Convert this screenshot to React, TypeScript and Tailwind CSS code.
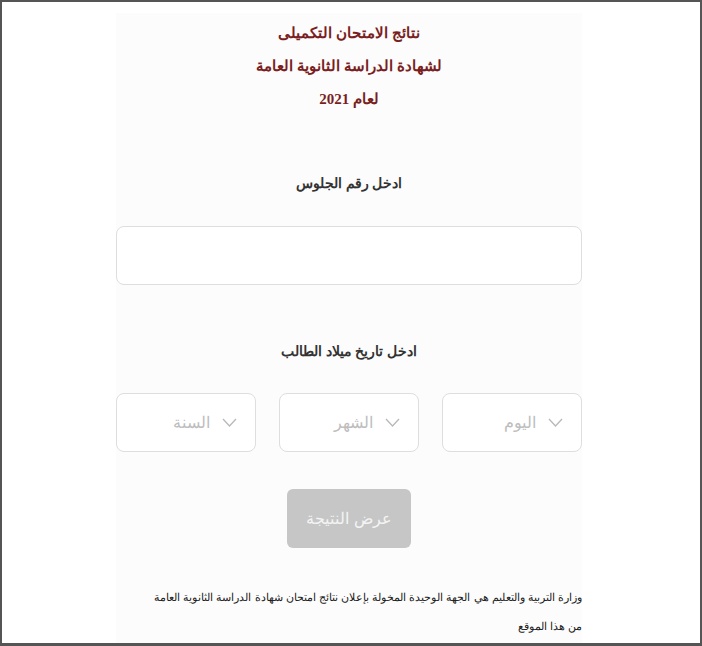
import React from "react";

function Chevron() {
  return (
    <svg width="15" height="9" viewBox="0 0 15 9" fill="none" className="shrink-0">
      <path d="M1 1 L7.5 8 L14 1" stroke="#b8b8b8" strokeWidth="1.3" />
    </svg>
  );
}

function Select({ label }: { label: string }) {
  return (
    <div className="flex h-[59px] w-[140px] items-center gap-[12px] rounded-[8px] border border-[#dedede] bg-white pr-[18px]">
      <Chevron />
      <span className="text-[16px] text-[#bdbdbd]">{label}</span>
    </div>
  );
}

export default function App() {
  return (
    <div
      className="h-[646px] w-[702px] overflow-hidden border-2 border-b-[3px] border-[#555] bg-white"
      style={{ fontFamily: '"Liberation Sans", sans-serif' }}
    >
      <div
        dir="rtl"
        className="ml-[114px] mt-[11px] flex h-[640px] w-[466px] flex-col items-center bg-[#fcfcfc] pt-[4px]"
      >
        <div
          className="text-center text-[15px] font-bold leading-[33px] text-[#7a1f1f]"
          style={{ fontFamily: '"Liberation Serif", serif' }}
        >
          <div>نتائج الامتحان التكميلى</div>
          <div>لشهادة الدراسة الثانوية العامة</div>
          <div>لعام 2021</div>
        </div>

        <div className="mt-[56px] text-[13.5px] font-bold leading-[24px] text-[#333]">ادخل رقم الجلوس</div>

        <div className="mt-[30px] h-[59px] w-full rounded-[8px] border border-[#dedede] bg-white" />

        <div className="mt-[55px] text-[13.5px] font-bold leading-[24px] text-[#333]">ادخل تاريخ ميلاد الطالب</div>

        <div className="mt-[29px] flex w-full justify-between">
          <Select label="اليوم" />
          <Select label="الشهر" />
          <Select label="السنة" />
        </div>

        <button className="mt-[37px] flex h-[59px] w-[124px] items-center justify-center rounded-[6px] bg-[#c6c6c6] text-[15.5px] text-[#f4f4f4]">
          عرض النتيجة
        </button>

        <div className="mt-[35px] w-[470px] self-start whitespace-nowrap text-right text-[11.3px] leading-[29px] text-[#222]">
          <div>وزارة التربية والتعليم هي الجهة الوحيدة المخولة بإعلان نتائج امتحان شهادة الدراسة الثانوية العامة</div>
          <div>من هذا الموقع</div>
        </div>
      </div>
    </div>
  );
}
